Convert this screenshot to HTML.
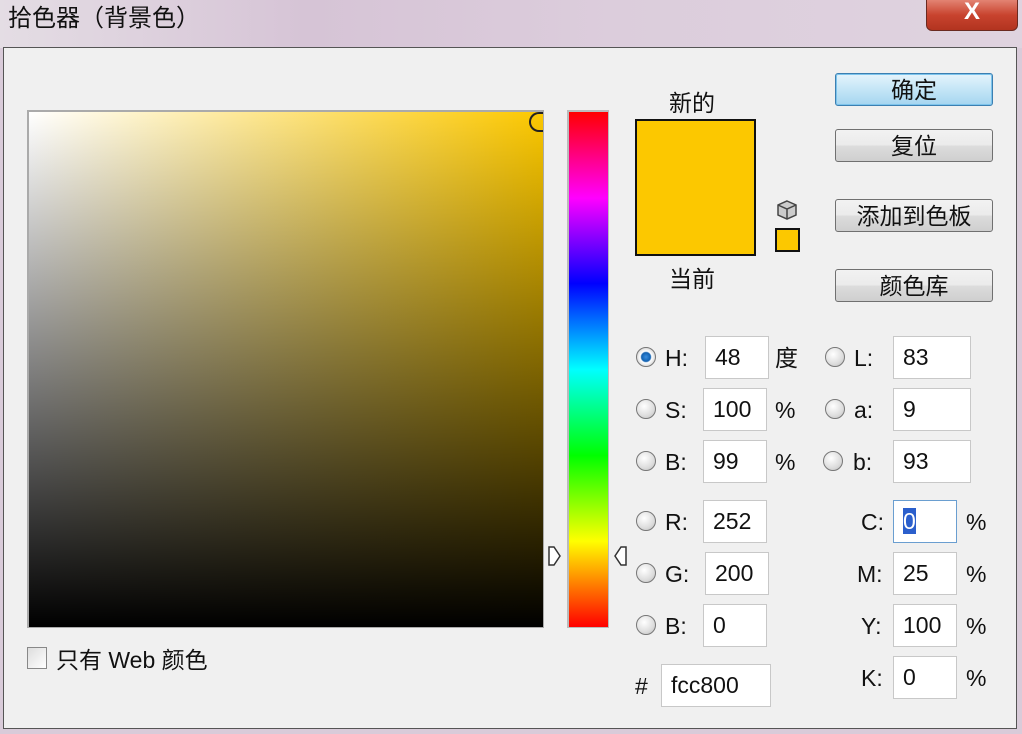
<!DOCTYPE html>
<html><head><meta charset="utf-8"><style>
body{margin:0;width:1022px;height:734px;overflow:hidden;background:#d9cbd9;font-family:"Liberation Sans","Noto Sans CJK SC",sans-serif;position:relative}
.a{position:absolute}
.t{font-size:23px;color:#111;line-height:28px}
.box{position:absolute;background:#fff;border:1px solid #c8c8c8;box-sizing:border-box;font-size:23px;padding-left:9px;line-height:40px;color:#111}
.rad{position:absolute;width:20px;height:20px;border-radius:50%;border:1px solid #777;background:radial-gradient(circle at 40% 35%,#fff,#ddd 60%,#bbb);box-sizing:border-box}
.btn{position:absolute;left:835px;width:158px;height:33px;box-sizing:border-box;border:1px solid #707070;border-radius:3px;background:linear-gradient(#f2f2f2 0,#ebebeb 48%,#dcdcdc 52%,#cfcfcf);text-align:center;font-size:23px;line-height:32px;color:#111}
</style></head><body>
<div class="a" style="left:0;top:0;width:1022px;height:48px;background:linear-gradient(90deg,#e4dde4 0,#d6c4d6 30%,#dccddc 60%,#dfd3df 100%)"></div>
<div class="a t" style="left:8px;top:5px;font-size:24px">拾色器（背景色）</div>
<div class="a" style="left:926px;top:-4px;width:90px;height:33px;border-radius:0 0 6px 6px;border:1px solid #6a2a20;background:linear-gradient(#e89080,#c8432e 55%,#b23420);color:#fff;font-size:24px;font-weight:bold;text-align:center;line-height:30px">X</div>
<div class="a" style="left:3px;top:47px;width:1014px;height:682px;background:#f0f0f0;border:1px solid #555;box-sizing:border-box"></div>
<div class="a" style="left:27px;top:110px;width:517px;height:518px;background:#aaa"></div>
<div class="a" style="left:29px;top:112px;width:514px;height:515px;background:linear-gradient(rgba(0,0,0,0),#000),linear-gradient(90deg,#fff,#fcc800)"></div>
<div class="a" style="left:529px;top:112px;width:14px;height:20px;border:2px solid #222;border-right:none;border-radius:12px 0 0 12px;box-sizing:border-box"></div>
<div class="a" style="left:567px;top:110px;width:42px;height:518px;background:#bbb"></div>
<div class="a" style="left:569px;top:112px;width:39px;height:515px;background:linear-gradient(#f00,#f0f 16.7%,#00f 33.3%,#0ff 50%,#0f0 66.7%,#ff0 83.3%,#f00)"></div>
<svg class="a" style="left:548px;top:546px" width="14" height="20"><path d="M1 1 L6 1 L12 10 L6 19 L1 19 Z" fill="#fff" stroke="#333" stroke-width="1.5"/></svg>
<svg class="a" style="left:613px;top:546px" width="14" height="20"><path d="M13 1 L8 1 L2 10 L8 19 L13 19 Z" fill="#fff" stroke="#333" stroke-width="1.5"/></svg>
<div class="a" style="left:27px;top:647px;width:20px;height:22px;border:1px solid #888;background:linear-gradient(135deg,#ddd,#fff);box-sizing:border-box"></div>
<div class="a t" style="left:56px;top:646px">只有 Web 颜色</div>
<div class="a t" style="left:669px;top:89px">新的</div>
<div class="a" style="left:635px;top:119px;width:121px;height:137px;background:#fcc800;border:2px solid #111;box-sizing:border-box"></div>
<div class="a t" style="left:669px;top:265px">当前</div>
<svg class="a" style="left:776px;top:199px" width="22" height="22"><path d="M11 2 L20 6 L20 16 L11 20 L2 16 L2 6 Z" fill="#ccc" stroke="#444" stroke-width="1.5"/><path d="M2 6 L11 10 L20 6 M11 10 L11 20" fill="none" stroke="#444" stroke-width="1.5"/></svg>
<div class="a" style="left:775px;top:228px;width:25px;height:24px;background:#fcc800;border:2px solid #111;box-sizing:border-box"></div>
<div class="btn" style="top:73px;border-color:#3c7fb1;background:linear-gradient(#e5f4fc,#c4e5f6 50%,#a5d5f0);box-shadow:0 0 0 1px #7dc4ec inset">确定</div>
<div class="btn" style="top:129px">复位</div>
<div class="btn" style="top:199px">添加到色板</div>
<div class="btn" style="top:269px">颜色库</div>
<div class="rad" style="left:636px;top:347px;background:radial-gradient(circle,#3a8ee0 0,#1060b0 35%,#fff 45%,#ddd 70%)"></div>
<div class="a t" style="left:665px;top:344px">H:</div><div class="box" style="left:705px;top:336px;width:64px;height:43px">48</div><div class="a t" style="left:775px;top:344px">度</div>
<div class="rad" style="left:636px;top:399px"></div>
<div class="a t" style="left:665px;top:396px">S:</div><div class="box" style="left:703px;top:388px;width:64px;height:43px">100</div><div class="a t" style="left:775px;top:396px">%</div>
<div class="rad" style="left:636px;top:451px"></div>
<div class="a t" style="left:665px;top:448px">B:</div><div class="box" style="left:703px;top:440px;width:64px;height:43px">99</div><div class="a t" style="left:775px;top:448px">%</div>
<div class="rad" style="left:636px;top:511px"></div>
<div class="a t" style="left:665px;top:508px">R:</div><div class="box" style="left:703px;top:500px;width:64px;height:43px">252</div>
<div class="rad" style="left:636px;top:563px"></div>
<div class="a t" style="left:665px;top:560px">G:</div><div class="box" style="left:705px;top:552px;width:64px;height:43px">200</div>
<div class="rad" style="left:636px;top:615px"></div>
<div class="a t" style="left:665px;top:612px">B:</div><div class="box" style="left:703px;top:604px;width:64px;height:43px">0</div>
<div class="a t" style="left:635px;top:672px">#</div><div class="box" style="left:661px;top:664px;width:110px;height:43px">fcc800</div>
<div class="rad" style="left:825px;top:347px"></div>
<div class="a t" style="left:854px;top:344px">L:</div><div class="box" style="left:893px;top:336px;width:78px;height:43px">83</div>
<div class="rad" style="left:825px;top:399px"></div>
<div class="a t" style="left:854px;top:396px">a:</div><div class="box" style="left:893px;top:388px;width:78px;height:43px">9</div>
<div class="rad" style="left:823px;top:451px"></div>
<div class="a t" style="left:853px;top:448px">b:</div><div class="box" style="left:893px;top:440px;width:78px;height:43px">93</div>
<div class="a t" style="left:861px;top:508px">C:</div><div class="box" style="left:893px;top:500px;width:64px;height:43px;border-color:#6a9ed0"><span style="background:#2b5fcc;color:#fff">0</span></div><div class="a t" style="left:966px;top:508px">%</div>
<div class="a t" style="left:857px;top:560px">M:</div><div class="box" style="left:893px;top:552px;width:64px;height:43px">25</div><div class="a t" style="left:966px;top:560px">%</div>
<div class="a t" style="left:861px;top:612px">Y:</div><div class="box" style="left:893px;top:604px;width:64px;height:43px">100</div><div class="a t" style="left:966px;top:612px">%</div>
<div class="a t" style="left:861px;top:664px">K:</div><div class="box" style="left:893px;top:656px;width:64px;height:43px">0</div><div class="a t" style="left:966px;top:664px">%</div>
</body></html>
